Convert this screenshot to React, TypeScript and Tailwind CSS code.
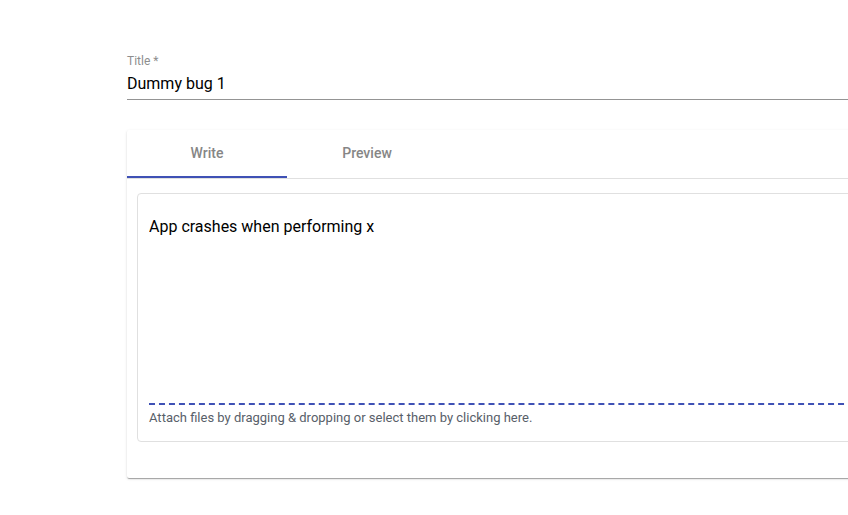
import { useState } from "react";

const tabs = ["Write", "Preview"] as const;
type Tab = (typeof tabs)[number];

function TitleField() {
  return (
    <div className="flex flex-col border-b border-[#949494] pb-[3px]">
      <label htmlFor="title" className="text-xs text-[#8e8e8e]">
        Title *
      </label>
      <input
        id="title"
        required
        defaultValue="Dummy bug 1"
        className="mt-[3px] h-6 w-full bg-transparent text-base text-black outline-none"
      />
    </div>
  );
}

function TabBar({ active, onSelect }: { active: Tab; onSelect: (tab: Tab) => void }) {
  return (
    <div role="tablist" className="flex border-b border-[#e0e0e0]">
      {tabs.map((tab) => (
        <button
          key={tab}
          type="button"
          role="tab"
          aria-selected={tab === active}
          onClick={() => onSelect(tab)}
          className={`h-12 w-40 border-b-2 text-sm font-medium text-[#868686] ${
            tab === active ? "border-[#3f51b5]" : "border-transparent"
          }`}
        >
          {tab}
        </button>
      ))}
    </div>
  );
}

export default function App() {
  const [active, setActive] = useState<Tab>("Write");
  const [text, setText] = useState("App crashes when performing x");

  return (
    <div className="min-h-screen overflow-x-hidden bg-white pt-[53px] pb-9 pl-[127px] font-[Roboto,sans-serif]">
      <form className="-mr-[38px]">
        <TitleField />
        <section className="mt-[30px] rounded-xs bg-white pb-9 shadow-[0_2px_1px_-1px_rgba(0,0,0,0.2),0_1px_1px_0_rgba(0,0,0,0.14),0_1px_3px_0_rgba(0,0,0,0.12)]">
          <TabBar active={active} onSelect={setActive} />
          <div className="mx-[10px] mt-[14px] rounded border border-[#e0e0e0] px-[11px] pt-[21px] pb-[13px]">
            {active === "Write" ? (
              <textarea
                aria-label="Description"
                value={text}
                onChange={(e) => setText(e.target.value)}
                className="block h-[188px] w-full resize-none bg-transparent text-base text-black outline-none"
              />
            ) : (
              <p className="h-[188px] text-base text-black">{text}</p>
            )}
            <label className="block cursor-pointer border-t-2 border-dashed border-[#3f51b5] pt-[3px] text-[13px] leading-5 text-[#586069]">
              Attach files by dragging &amp; dropping or select them by clicking here.
              <input type="file" multiple className="sr-only" />
            </label>
          </div>
        </section>
      </form>
    </div>
  );
}
